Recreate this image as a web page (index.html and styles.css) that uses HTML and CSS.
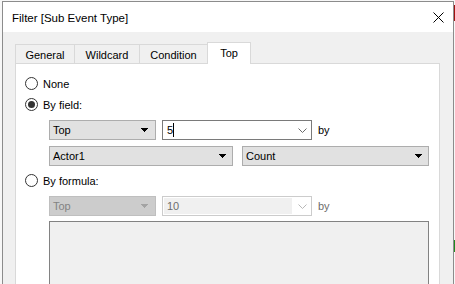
FILE: index.html
```html
<!DOCTYPE html>
<html>
<head>
<meta charset="utf-8">
<title>Filter</title>
<link rel="stylesheet" href="styles.css">
</head>
<body>
<div class="window">
  <div class="titlebar">
    <span class="title">Filter [Sub Event Type]</span>
    <svg class="close" width="11" height="11" viewBox="0 0 11 11"><path d="M0.5 0.5 L10.5 10.5 M10.5 0.5 L0.5 10.5" stroke="#000" stroke-width="1" fill="none"/></svg>
  </div>
  <div class="client">
    <div class="tabs">
      <div class="tab t-general">General</div>
      <div class="tab t-wildcard">Wildcard</div>
      <div class="tab t-condition">Condition</div>
      <div class="tab active t-top">Top</div>
    </div>
    <div class="panel">
      <div class="radio-row"><span class="radio"></span><span>None</span></div>
      <div class="radio-row"><span class="radio checked"></span><span>By field:</span></div>
      <div class="field-row row1">
        <div class="select w-top"><span>Top</span><svg class="arrow" width="7" height="4" viewBox="0 0 7 4"><polygon points="0,0 7,0 3.5,4" fill="#000" shape-rendering="crispEdges"/></svg></div>
        <div class="combo"><span class="value">5</span><span class="caret"></span><svg class="chev" width="9" height="5" viewBox="0 0 9 5"><polyline points="0.5,0.5 4.5,4.5 8.5,0.5" fill="none" stroke="#6a6a6a" stroke-width="1"/></svg></div>
        <span class="by">by</span>
      </div>
      <div class="field-row row2">
        <div class="select w-actor"><span>Actor1</span><svg class="arrow" width="7" height="4" viewBox="0 0 7 4"><polygon points="0,0 7,0 3.5,4" fill="#000" shape-rendering="crispEdges"/></svg></div>
        <div class="select w-count"><span>Count</span><svg class="arrow" width="7" height="4" viewBox="0 0 7 4"><polygon points="0,0 7,0 3.5,4" fill="#000" shape-rendering="crispEdges"/></svg></div>
      </div>
      <div class="radio-row formula-radio"><span class="radio"></span><span>By formula:</span></div>
      <div class="field-row row3">
        <div class="select w-top disabled"><span>Top</span><svg class="arrow" width="7" height="4" viewBox="0 0 7 4"><polygon points="0,0 7,0 3.5,4" fill="#a3a3a3" shape-rendering="crispEdges"/></svg></div>
        <div class="combo disabled"><span class="field">10</span><svg class="chev" width="9" height="5" viewBox="0 0 9 5"><polyline points="0.5,0.5 4.5,4.5 8.5,0.5" fill="none" stroke="#b8b8b8" stroke-width="1"/></svg></div>
        <span class="by dim">by</span>
      </div>
      <div class="formula"></div>
    </div>
  </div>
</div>
</body>
</html>
```
FILE: styles.css
```css
html, body {
  margin: 0;
  padding: 0;
}
body {
  width: 455px;
  height: 284px;
  overflow: hidden;
  padding: 1px 0 0 2px;
  box-sizing: border-box;
  font-family: "Liberation Sans", Arial, sans-serif;
  font-size: 11px;
  color: #000;
  background:
    linear-gradient(#a01010, #a01010) no-repeat 454px 5px / 1px 16px,
    linear-gradient(#1e8a1e, #1e8a1e) no-repeat 454px 240px / 1px 12px,
    #f7f7f7;
}
.window {
  width: 452px;
  height: 283px;
  box-sizing: border-box;
  border: 1px solid #8c8c8c;
  border-bottom: none;
  background: #f0f0f0;
  display: flex;
  flex-direction: column;
  overflow: hidden;
}
.titlebar {
  height: 30px;
  flex: none;
  background: #fff;
  display: flex;
  align-items: center;
  justify-content: space-between;
  padding: 0 9px 0 9px;
}
.title {
  font-size: 11.5px;
  padding-top: 1px;
}
.close {
  display: block;
}
.client {
  padding: 10px 13px 0 12px;
  flex: 1;
  display: flex;
  flex-direction: column;
  min-height: 0;
}
.tabs {
  display: flex;
  align-items: flex-end;
  height: 21px;
  flex: none;
}
.tab {
  box-sizing: border-box;
  height: 19px;
  border: 1px solid #d9d9d9;
  border-bottom: none;
  background: #f0f0f0;
  display: flex;
  align-items: center;
  justify-content: center;
  margin-right: -1px;
  padding-top: 1px;
}
.t-general { width: 60px; }
.t-wildcard { width: 66px; }
.t-condition { width: 69px; }
.t-top { width: 44px; }
.tab.active {
  height: 22px;
  margin-bottom: -1px;
  background: #fff;
  position: relative;
  z-index: 1;
  padding-top: 0;
  padding-bottom: 1px;
}
.panel {
  box-sizing: border-box;
  width: 425px;
  flex: 1;
  min-height: 0;
  border: 1px solid #d9d9d9;
  border-bottom: none;
  background: #fff;
  padding: 9px 0 0 9px;
  display: flex;
  flex-direction: column;
}
.radio-row {
  height: 21px;
  flex: none;
  display: flex;
  align-items: center;
}
.radio {
  box-sizing: border-box;
  width: 13px;
  height: 13px;
  border: 1px solid #333;
  border-radius: 50%;
  background: #fff;
  margin-right: 5px;
  display: flex;
  align-items: center;
  justify-content: center;
}
.radio.checked::after {
  content: "";
  width: 7px;
  height: 7px;
  border-radius: 50%;
  background: #333;
}
.field-row {
  display: flex;
  align-items: center;
  margin-left: 24px;
  height: 20px;
  flex: none;
}
.row1 { margin-top: 5px; }
.row2 { margin-top: 6px; gap: 9px; }
.formula-radio { margin-top: 4px; }
.row3 { margin-top: 5px; }
.select {
  box-sizing: border-box;
  height: 20px;
  border: 1px solid #adadad;
  background: #e1e1e1;
  display: flex;
  align-items: center;
  justify-content: space-between;
  padding: 0 6px 0 3px;
}
.select .arrow { display: block; }
.w-top { width: 107px; padding-right: 7px; }
.w-actor { width: 184px; }
.w-count { width: 187px; }
.select.disabled {
  background: #cccccc;
  border-color: #bfbfbf;
  color: #838383;
}
.combo {
  box-sizing: border-box;
  width: 150px;
  height: 20px;
  margin-left: 6px;
  border: 1px solid #7a7a7a;
  background: #fff;
  display: flex;
  align-items: center;
  padding: 0 4px 0 4px;
}
.combo .value { line-height: 14px; }
.caret {
  width: 1px;
  height: 14px;
  background: #000;
}
.combo .chev {
  margin-left: auto;
  display: block;
}
.combo.disabled {
  border-color: #cccccc;
  padding: 1px 4px 1px 1px;
  align-items: stretch;
}
.combo.disabled .field {
  background: #f0f0f0;
  width: 125px;
  padding-left: 3px;
  color: #6d6d6d;
  display: flex;
  align-items: center;
}
.combo.disabled .chev {
  align-self: center;
}
.by {
  margin-left: 6px;
}
.by.dim {
  color: #6d6d6d;
}
.formula {
  box-sizing: border-box;
  margin: 5px 0 0 24px;
  width: 380px;
  flex: 1;
  min-height: 0;
  border: 1px solid #828282;
  border-bottom: none;
  background: #f0f0f0;
}
```
